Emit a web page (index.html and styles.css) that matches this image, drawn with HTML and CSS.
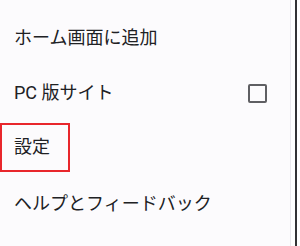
FILE: index.html
```html
<!DOCTYPE html>
<html lang="ja">
<head>
<meta charset="utf-8">
<link rel="stylesheet" href="styles.css">
</head>
<body>
<div class="screen">
  <div class="menu">
    <div class="item"><span class="label">ホーム画面に追加</span></div>
    <div class="item"><span class="label">PC 版サイト</span><span class="checkbox"></span></div>
    <div class="item"><span class="label highlight">設定</span></div>
    <div class="item"><span class="label">ヘルプとフィードバック</span></div>
  </div>
  <div class="gap"></div>
  <div class="edge"></div>
  <div class="rest"></div>
</div>
</body>
</html>
```
FILE: styles.css
```css
html, body {
  margin: 0;
  padding: 0;
  background: #ffffff;
}
.screen {
  display: flex;
  width: 300px;
  height: 246px;
  overflow: hidden;
}
.menu {
  width: 290px;
  flex: none;
  background: #fcfbfd;
  border-right: 1px solid #ebe9ee;
  padding-top: 10px;
  box-sizing: border-box;
  width: 291px;
  font-family: "Roboto", "Noto Sans CJK JP", sans-serif;
  font-size: 18px;
  color: #202124;
}
.item {
  height: 55.5px;
  display: flex;
  align-items: center;
  justify-content: space-between;
  padding: 0 23px 0 14px;
}
.label {
  line-height: 24px;
}
.highlight {
  border: 2px solid #e8262c;
  margin-left: -14px;
  padding: 10px 18px 11px 12px;
  margin-top: -3px;
}
.checkbox {
  width: 15px;
  height: 15px;
  border: 2px solid #5f5f63;
  border-radius: 2px;
}
.gap {
  width: 4px;
  flex: none;
}
.edge {
  width: 2px;
  flex: none;
  background: #333335;
}
.rest {
  flex: 1;
}
```
